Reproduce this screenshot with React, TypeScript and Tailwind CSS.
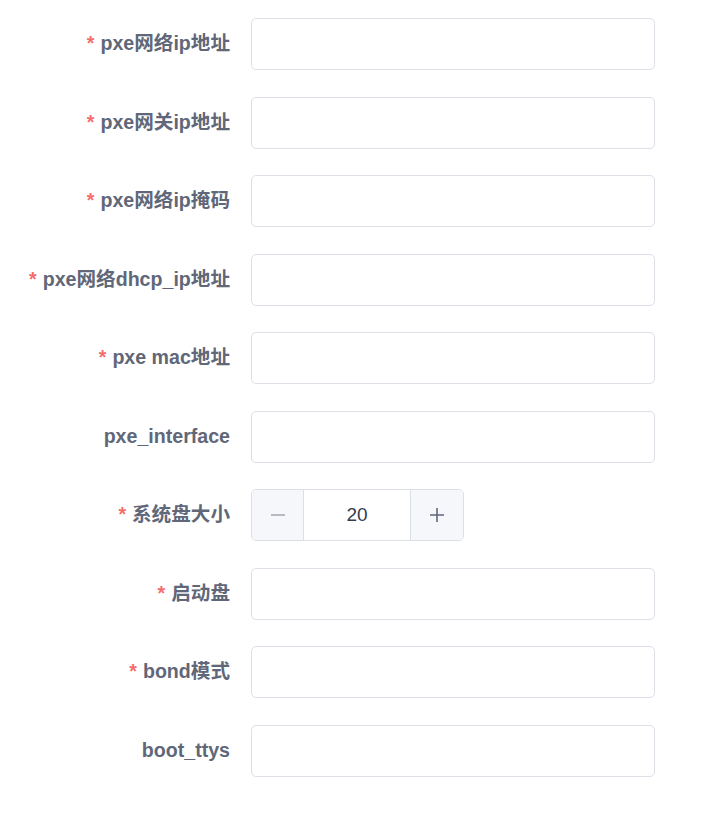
import React, { useState } from 'react';

type Field = { label: string; required: boolean; kind?: 'number' };

const fields: Field[] = [
  { label: 'pxe网络ip地址', required: true },
  { label: 'pxe网关ip地址', required: true },
  { label: 'pxe网络ip掩码', required: true },
  { label: 'pxe网络dhcp_ip地址', required: true },
  { label: 'pxe mac地址', required: true },
  { label: 'pxe_interface', required: false },
  { label: '系统盘大小', required: true, kind: 'number' },
  { label: '启动盘', required: true },
  { label: 'bond模式', required: true },
  { label: 'boot_ttys', required: false },
];

const Stepper: React.FC = () => {
  const [value, setValue] = useState(20);
  return (
    <div className="flex h-[52px] w-[213px] overflow-hidden rounded-[5px] border border-[#dcdfe6]">
      <button
        className="flex w-[52px] items-center justify-center border-r border-[#dcdfe6] bg-[#f5f7fa] text-[#a8abb2]"
        onClick={() => setValue(value - 1)}
      >
        <svg width="18" height="18" viewBox="0 0 18 18">
          <path d="M2 9h14" stroke="currentColor" strokeWidth="1.6" />
        </svg>
      </button>
      <input
        className="min-w-0 flex-1 bg-white text-center text-[19px] text-[#333c4e] outline-none"
        value={value}
        onChange={(e) => setValue(Number(e.target.value) || 0)}
      />
      <button
        className="flex w-[53px] items-center justify-center border-l border-[#dcdfe6] bg-[#f5f7fa] text-[#5f6779]"
        onClick={() => setValue(value + 1)}
      >
        <svg width="18" height="18" viewBox="0 0 18 18">
          <path d="M2 9h14M9 2v14" stroke="currentColor" strokeWidth="1.6" />
        </svg>
      </button>
    </div>
  );
};

export default function App() {
  return (
    <div
      className="min-h-screen bg-white pt-[18px]"
      style={{ fontFamily: '"Liberation Sans", "Noto Sans CJK SC", sans-serif' }}
    >
      <div className="flex flex-col gap-[26.5px]">
        {fields.map((f) => (
          <div key={f.label} className="flex items-center">
            <label className="w-[231px] whitespace-nowrap pr-[1px] text-right text-[19.6px] font-bold text-[#5f6779]">
              {f.required && <span className="mr-[6px] text-[#f56c6c]">*</span>}
              {f.label}
            </label>
            <div className="ml-[20px]">
              {f.kind === 'number' ? (
                <Stepper />
              ) : (
                <input className="h-[52px] w-[404px] rounded-[5px] border border-[#dcdfe6] bg-white px-4 text-[18px] text-[#606266] outline-none" />
              )}
            </div>
          </div>
        ))}
      </div>
    </div>
  );
}
